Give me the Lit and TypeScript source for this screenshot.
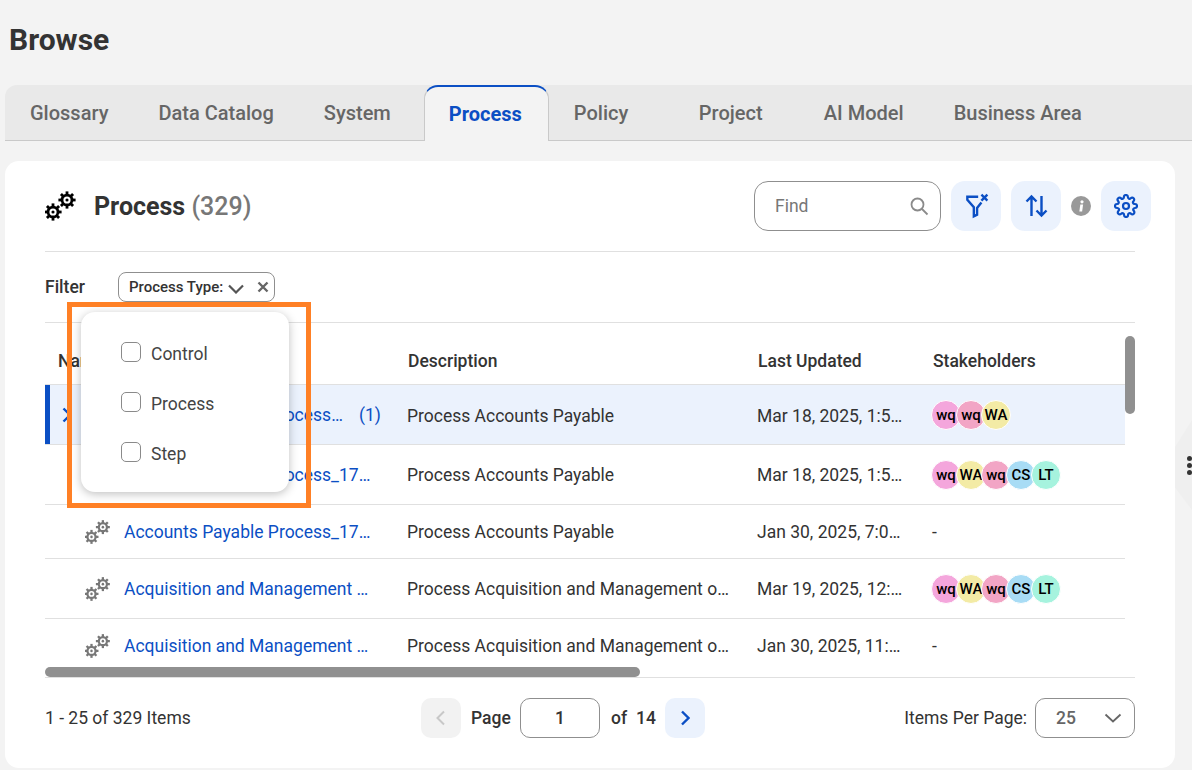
import { LitElement, html, css, svg } from "lit";
import { customElement } from "lit/decorators.js";

const gear = (cx: number, cy: number, r: number, fill: string) => {
  const teeth = [];
  for (let i = 0; i < 8; i++) {
    const a = (i * 45 * Math.PI) / 180;
    teeth.push(svg`<line x1=${cx + Math.cos(a) * r * 0.5} y1=${cy + Math.sin(a) * r * 0.5} x2=${cx + Math.cos(a) * r} y2=${cy + Math.sin(a) * r} stroke=${fill} stroke-width="2.8"/>`);
  }
  return svg`${teeth}
    <circle cx=${cx} cy=${cy} r=${r * 0.74} fill=${fill}/>
    <circle cx=${cx} cy=${cy} r=${r * 0.42} fill="#fff"/>
    <circle cx=${cx} cy=${cy} r=${r * 0.18} fill=${fill}/>`;
};
const gears = (fill: string, w: number, h: number) => html`<svg width=${w} height=${h} viewBox="0 0 32 32">
  ${gear(8, 22, 8.6, fill)}${gear(22, 10, 8.6, fill)}
</svg>`;

const people: Record<string, string> = { a: "wq|#f4a6dc", b: "wq|#f2a5c5", w: "WA|#f3eba5", c: "CS|#a8dcf5", l: "LT|#a6f3de" };

type Row = { name: string; cnt?: string; desc: string; date: string; av: string; h: string; sel?: boolean; nw: string };
const rows: Row[] = [
  { name: "Accounts Payable Process_1742", cnt: "(1)", desc: "Process Accounts Payable", date: "Mar 18, 2025, 1:55 PM", av: "abw", h: "r60", sel: true, nw: "n1" },
  { name: "Accounts Payable Process_1742", desc: "Process Accounts Payable", date: "Mar 18, 2025, 1:55 PM", av: "awbcl", h: "r60", nw: "n2" },
  { name: "Accounts Payable Process_1738", desc: "Process Accounts Payable", date: "Jan 30, 2025, 7:05 PM", av: "", h: "r54", nw: "n2" },
  { name: "Acquisition and Management of Assets", desc: "Process Acquisition and Management of Assets", date: "Mar 19, 2025, 12:10 PM", av: "awbcl", h: "r60", nw: "n2" },
  { name: "Acquisition and Management of Assets", desc: "Process Acquisition and Management of Assets", date: "Jan 30, 2025, 11:20 AM", av: "", h: "r60b", nw: "n2" },
];

@customElement("app-root")
export class AppRoot extends LitElement {
  static styles = css`
    :host { display: block; width: 1192px; height: 770px; overflow: hidden; background: #f3f3f3; font-family: Roboto, "Liberation Sans", sans-serif; color: #333; position: relative; font-size: 17.5px; }
    * { box-sizing: border-box; }
    h1 { margin: 0; height: 85px; padding: 22px 0 0 9px; font-size: 30px; line-height: 36px; font-weight: 700; color: #333; }
    .tabs { margin-left: 5px; height: 56px; display: flex; background: #e9e9e9; border-bottom: 1px solid #c9c9c9; border-top-left-radius: 12px; }
    .tab { min-width: 125px; padding: 0 25px; display: flex; align-items: center; font-size: 20px; font-weight: 500; color: #666; height: 56px; white-space: nowrap; }
    .tab.on { background: #f3f3f3; color: #0b4fc4; font-weight: 700; border: 1px solid #c9c9c9; border-top: 2px solid #0b4fc4; border-bottom: 0; border-radius: 14px 14px 0 0; padding: 0 24px; }
    .card { margin: 20px 17px 0 5px; height: 607px; background: #fff; border-radius: 14px; padding: 20px 40px 0; position: relative; display: flex; flex-direction: column; }
    .head { height: 71px; padding-bottom: 21px; display: flex; align-items: center; border-bottom: 1px solid #e0e0e0; }
    .title { margin: 1px 0 0 17px; font-size: 25px; font-weight: 700; color: #333; flex: 1; }
    .title span { color: #777; font-weight: 500; }
    .actions { display: flex; align-items: center; gap: 10px; margin-right: -16px; }
    .find { width: 187px; height: 50px; border: 1px solid #8f8f8f; border-radius: 14px; display: flex; align-items: center; justify-content: space-between; padding: 0 11px 0 20px; color: #777; }
    .btn { width: 50px; height: 50px; background: #ebf2fd; border-radius: 14px; display: flex; align-items: center; justify-content: center; }
    .filter { height: 71px; display: flex; align-items: center; gap: 33px; border-bottom: 1px solid #e0e0e0; font-weight: 500; }
    .chip { width: 157px; height: 30px; border: 1px solid #8f8f8f; border-radius: 8px; display: flex; align-items: center; padding: 0 5px 0 10px; font-size: 15px; font-weight: 500; white-space: nowrap; }
    .chip .cv { margin: 3px 0 0 5px; flex: none; }
    .chip .cx { margin-left: auto; flex: none; }
    .table { height: 355px; position: relative; overflow: hidden; border-bottom: 1px solid #e0e0e0; }
    .hrow, .row { display: grid; grid-template-columns: 362px 350px 175px 1fr; align-items: center; width: 1080px; }
    .hrow { height: 62px; border-bottom: 1px solid #e0e0e0; font-weight: 500; padding-top: 15px; }
    .hrow div { padding-left: 1px; }
    .hrow div:first-child { padding-left: 13px; }
    .row { border-bottom: 1px solid #e0e0e0; }
    .r60 { height: 60px; } .r54 { height: 54px; } .r60b { height: 60px; padding-bottom: 6px; border-bottom: 0; }
    .row.sel { background: #ebf2fd; box-shadow: inset 5px 0 0 #0b4fc4; }
    .row.sel .txt { padding-top: 2px; }
    .namecell { display: flex; align-items: center; padding-left: 40px; position: relative; }
    .exp { position: absolute; left: 17px; top: 50%; margin-top: -8px; }
    .link { color: #0b4fc4; overflow: hidden; text-overflow: ellipsis; white-space: nowrap; margin-left: 13px; }
    .n1 { width: 220px; } .n2 { width: 247px; }
    .cnt { color: #0b4fc4; margin-left: 15px; }
    .txt { overflow: hidden; text-overflow: ellipsis; white-space: nowrap; width: 322px; }
    .date { width: 148px; }
    .avs { display: flex; margin-left: -1px; }
    .av { width: 30px; height: 30px; border-radius: 50%; border: 1px solid #fff; margin-right: -5px; display: flex; align-items: center; justify-content: center; font-size: 15px; font-weight: 500; color: #000; }
    .hbar { position: absolute; left: 0; right: 495px; bottom: 0; height: 10px; border-radius: 5px; background: #909090; }
    .vbar { position: absolute; left: 1080px; top: 13px; width: 10px; height: 78px; border-radius: 5px; background: #909090; }
    .foot { flex: 1; display: flex; align-items: center; padding-bottom: 10px; position: relative; justify-content: space-between; }
    .pager { position: absolute; left: 376px; top: 20px; display: flex; align-items: center; font-weight: 500; }
    .pg { width: 40px; height: 40px; border-radius: 10px; display: flex; align-items: center; justify-content: center; background: #f2f2f2; }
    .pg.next { background: #ebf2fd; }
    .pagelabel { margin-left: 10px; width: 40px; white-space: nowrap; }
    .count { margin: 0 9px; }
    .num { width: 80px; height: 40px; border: 1px solid #8f8f8f; border-radius: 10px; display: flex; align-items: center; justify-content: center; margin: 0 11px 0 9px; }
    .ipp { display: flex; align-items: center; gap: 8px; }
    .sel2 { width: 100px; height: 40px; border: 1px solid #8f8f8f; border-radius: 10px; display: flex; align-items: center; justify-content: space-between; padding: 0 12px 0 20px; font-weight: 500; color: #666; }
    .pop { position: absolute; left: 81px; top: 312px; width: 208px; height: 180px; background: #fff; border-radius: 14px; box-shadow: 0 2px 10px rgba(0,0,0,.25); padding: 15px 0 0 40px; display: flex; flex-direction: column; color: #444; }
    .opt { height: 50px; display: flex; align-items: center; gap: 10px; }
    .opt span { padding-top: 3px; }
    .box { width: 20px; height: 20px; border: 1px solid #8a8a8a; border-radius: 5px; }
    .orange { position: absolute; left: 67px; top: 302px; width: 244px; height: 206px; border: 5px solid #ff8025; pointer-events: none; }
    .side { position: absolute; left: 1175px; top: 420px; width: 17px; height: 90px; background: #efefef; clip-path: polygon(100% 0, 100% 100%, 0 75%, 0 30%); }
    .grip { position: absolute; left: 1187px; top: 456px; width: 5px; display: flex; flex-direction: column; gap: 2px; }
    .grip i { width: 5px; height: 5px; border-radius: 50%; background: #333; }
  `;

  render() {
    const tabs = ["Glossary", "Data Catalog", "System", "Process", "Policy", "Project", "AI Model", "Business Area"];
    return html`
      <h1>Browse</h1>
      <div class="tabs">${tabs.map((t) => html`<div class="tab ${t === "Process" ? "on" : ""}">${t}</div>`)}</div>
      <div class="card">
        <div class="head">
          ${gears("#000", 32, 32)}
          <div class="title">Process <span>(329)</span></div>
          <div class="actions">
            <div class="find">Find
              <svg width="20" height="20" viewBox="0 0 20 20" fill="none" stroke="#8a8a8a" stroke-width="1.8"><circle cx="8.5" cy="8.5" r="6"/><path d="M13 13l5.5 5.5"/></svg>
            </div>
            <div class="btn"><svg width="26" height="26" viewBox="0 0 24 24" fill="none" stroke="#0b4fc4" stroke-width="2.2"><path d="M14 3.5H4v2.8L10 13v8.5l3-1.5v-6.2l4-5"/><path d="M17 1.5l5.5 5.5M22.5 1.5L17 7"/></svg></div>
            <div class="btn"><svg width="24" height="24" viewBox="0 0 24 24" fill="none" stroke="#0b4fc4" stroke-width="2.4"><path d="M7.5 22V2.5M2.5 7.5l5-5 5 5M17.5 2v19.5M12.5 16.5l5 5 5-5"/></svg></div>
            <svg width="20" height="20" viewBox="0 0 20 20"><circle cx="10" cy="10" r="10" fill="#999"/><rect x="9" y="8.5" width="2.8" height="7" fill="#fff" transform="skewX(-8) translate(1.5 0)"/><circle cx="11" cy="5.8" r="1.6" fill="#fff"/></svg>
            <div class="btn"><svg width="24" height="24" viewBox="0 0 24 24" fill="none" stroke="#0b4fc4" stroke-width="2.2" stroke-linejoin="round"><circle cx="12" cy="12" r="3"/><path d="M19.4 15a1.65 1.65 0 0 0 .33 1.82l.06.06a2 2 0 1 1-2.83 2.83l-.06-.06a1.65 1.65 0 0 0-2.82 1.17V21a2 2 0 0 1-4 0v-.09a1.65 1.65 0 0 0-2.82-1.17l-.06.06a2 2 0 1 1-2.83-2.83l.06-.06A1.65 1.65 0 0 0 3.26 14H3a2 2 0 0 1 0-4h.09A1.65 1.65 0 0 0 4.26 7.18l-.06-.06A2 2 0 1 1 7.03 4.29l.06.06A1.65 1.65 0 0 0 9.9 3.18V3a2 2 0 0 1 4 0v.09a1.65 1.65 0 0 0 2.82 1.17l.06-.06a2 2 0 1 1 2.83 2.83l-.06.06A1.65 1.65 0 0 0 20.74 10H21a2 2 0 0 1 0 4h-.09a1.65 1.65 0 0 0-1.51 1z"/></svg></div>
          </div>
        </div>
        <div class="filter">Filter
          <div class="chip">Process Type:
            <svg class="cv" width="16" height="10" viewBox="0 0 16 10" fill="none" stroke="#555" stroke-width="2.2"><path d="M1 1.5l7 7 7-7"/></svg>
            <svg class="cx" width="12" height="12" viewBox="0 0 12 12" fill="none" stroke="#666" stroke-width="2.4"><path d="M1.5 1.5l9 9M10.5 1.5l-9 9"/></svg>
          </div>
        </div>
        <div class="table">
          <div class="hrow"><div>Name</div><div>Description</div><div>Last Updated</div><div>Stakeholders</div></div>
          ${rows.map((r) => html`<div class="row ${r.h} ${r.sel ? "sel" : ""}">
            <div class="namecell">
              ${r.sel ? html`<svg class="exp" width="10" height="16" viewBox="0 0 10 16" fill="none" stroke="#0b4fc4" stroke-width="2.4"><path d="M1.5 1.5L8 8l-6.5 6.5"/></svg>` : ""}
              ${gears("#777", 26, 26)}
              <span class="link ${r.nw}">${r.name}</span>
              ${r.cnt ? html`<span class="cnt">${r.cnt}</span>` : ""}
            </div>
            <div class="txt">${r.desc}</div>
            <div class="txt date">${r.date}</div>
            <div>${r.av
              ? html`<div class="avs">${[...r.av].map((k) => {
                  const [t, c] = people[k].split("|");
                  return html`<div class="av" style="background:${c}">${t}</div>`;
                })}</div>`
              : "-"}</div>
          </div>`)}
          <div class="hbar"></div>
          <div class="vbar"></div>
        </div>
        <div class="foot">
          <div>1 - 25 of 329 Items</div>
          <div class="pager">
            <div class="pg"><svg width="10" height="16" viewBox="0 0 10 16" fill="none" stroke="#c8c8c8" stroke-width="2"><path d="M8 1.5L1.5 8 8 14.5"/></svg></div>
            <span class="pagelabel">Page</span>
            <div class="num">1</div>
            <span>of</span><span class="count">14</span>
            <div class="pg next"><svg width="10" height="16" viewBox="0 0 10 16" fill="none" stroke="#0b4fc4" stroke-width="2.4"><path d="M2 1.5L8.5 8 2 14.5"/></svg></div>
          </div>
          <div class="ipp">Items Per Page:
            <div class="sel2">25 <svg width="18" height="10" viewBox="0 0 18 10" fill="none" stroke="#666" stroke-width="1.8"><path d="M1.5 1.5L9 8.5l7.5-7"/></svg></div>
          </div>
        </div>
      </div>
      <div class="pop">
        ${["Control", "Process", "Step"].map((o) => html`<div class="opt"><div class="box"></div><span>${o}</span></div>`)}
      </div>
      <div class="orange"></div>
      <div class="side"></div>
      <div class="grip"><i></i><i></i><i></i></div>
    `;
  }
}
